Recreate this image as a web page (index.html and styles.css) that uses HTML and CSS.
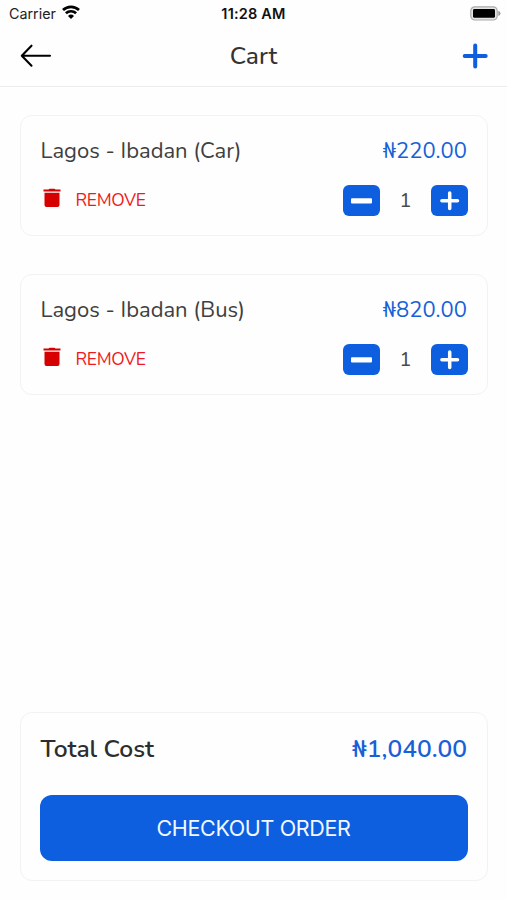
FILE: index.html
```html
<!DOCTYPE html>
<html lang="en">
<head>
<meta charset="utf-8">
<title>Cart</title>
<link rel="stylesheet" href="styles.css">
</head>
<body>
<div class="screen">
  <div class="status">
    <div class="carrier"><span class="carrier-name">Carrier</span>
      <svg class="wifi" width="18" height="14" viewBox="0 0 18 14"><g fill="none" stroke="#000" stroke-width="2.7"><path d="M1 5.1a11.6 11.6 0 0 1 16 0"/><path d="M3.9 8.3a7.400 7.400 0 0 1 10.200 0"/></g><path d="M6 10.900a4.400 4.400 0 0 1 6 0L9 13.900z"/></svg>
    </div>
    <span class="time">11:28 AM</span>
    <svg class="battery" width="31" height="15" viewBox="0 0 31 15"><rect x=".8" y=".8" width="26.4" height="13.2" rx="4" fill="#e4e4e4" stroke="#aaa" stroke-width="1.2"/><rect x="3" y="3" width="22" height="8.8" rx="1.4"/><path d="M28.3 4.8q2.2.7 2.2 2.6t-2.2 2.6z" fill="#999"/></svg>
  </div>
  <header class="header">
    <svg class="back" width="32" height="24" viewBox="0 0 32 24"><path d="M30 11.700H2M11.500 1.700L1.800 11.700l9.700 10" fill="none" stroke="#000" stroke-width="2.1" stroke-linecap="round" stroke-linejoin="round"/></svg>
    <h1 class="title">Cart</h1>
    <svg class="add" width="26" height="26" viewBox="0 0 26 26"><path d="M13.200 2.500v21M2.700 13h21" stroke="#0d5fdf" stroke-width="4" stroke-linecap="round"/></svg>
  </header>
  <main class="items">
    <section class="card">
      <div class="row"><span class="name">Lagos - Ibadan (Car)</span><span class="price">₦220.00</span></div>
      <div class="row actions">
        <div class="remove"><svg class="trash" width="18" height="20" viewBox="0 0 18 20"><path d="M.5 1.600h5l1-.9h5l1 .9h5v2H.5zM1.500 4.700h15v12.300q0 2-2 2h-11q-2 0-2-2z" fill="#d60000"/></svg><span class="remove-text">REMOVE</span></div>
        <div class="stepper">
          <span class="step"><svg width="37" height="31" viewBox="0 0 37 31"><rect x="8" y="13.200" width="21" height="5.200" rx="1" fill="#fff"/></svg></span>
          <span class="qty">1</span>
          <span class="step"><svg width="37" height="31" viewBox="0 0 37 31"><path d="M18.700 8v15.600M10.900 15.800h15.600" stroke="#fff" stroke-width="3.500" stroke-linecap="round"/></svg></span>
        </div>
      </div>
    </section>
    <section class="card">
      <div class="row"><span class="name">Lagos - Ibadan (Bus)</span><span class="price">₦820.00</span></div>
      <div class="row actions">
        <div class="remove"><svg class="trash" width="18" height="20" viewBox="0 0 18 20"><path d="M.5 1.600h5l1-.9h5l1 .9h5v2H.5zM1.500 4.700h15v12.300q0 2-2 2h-11q-2 0-2-2z" fill="#d60000"/></svg><span class="remove-text">REMOVE</span></div>
        <div class="stepper">
          <span class="step"><svg width="37" height="31" viewBox="0 0 37 31"><rect x="8" y="13.200" width="21" height="5.200" rx="1" fill="#fff"/></svg></span>
          <span class="qty">1</span>
          <span class="step"><svg width="37" height="31" viewBox="0 0 37 31"><path d="M18.700 8v15.600M10.900 15.800h15.600" stroke="#fff" stroke-width="3.500" stroke-linecap="round"/></svg></span>
        </div>
      </div>
    </section>
  </main>
  <footer class="summary">
    <div class="row total"><span>Total Cost</span><span class="total-price">₦1,040.00</span></div>
    <button class="checkout">CHECKOUT ORDER</button>
  </footer>
</div>
</body>
</html>
```
FILE: styles.css
```css
* { box-sizing: border-box; }
body { margin: 0; background: #fefefe; font-family: Nunito, "Noto Sans", sans-serif; color: #3f3f3f; }
svg { display: block; flex: none; }
.screen { width: 507px; height: 900px; display: flex; flex-direction: column; overflow: hidden; }
.status { height: 27px; flex: none; display: grid; grid-template-columns: 1fr auto 1fr; padding: 0 6px; font-family: Inter, sans-serif; line-height: 27px; color: #222; }
.carrier { display: flex; gap: 6px; padding-left: 3px; font-size: 14.3px; }
.wifi { margin-top: 5px; }
.time { font-size: 14.5px; font-weight: 600; letter-spacing: .2px; color: #111; }
.battery { justify-self: end; margin-top: 6px; }
.header { height: 60px; flex: none; display: grid; grid-template-columns: 1fr auto 1fr; align-items: center; padding: 0 19px 2px; border-bottom: 1px solid #ececec; }
.back { margin-left: 1px; }
.title { margin: 0; font-size: 24.5px; line-height: 34px; font-weight: 500; color: #333; }
.add { justify-self: end; }
.items { padding: 28px 19px 0 20px; display: flex; flex-direction: column; gap: 38px; }
.card { height: 121px; border: 1px solid #f2f2f2; border-radius: 12px; padding: 19px 19px 0; background: #fefefe; }
.row { display: flex; justify-content: space-between; align-items: center; white-space: nowrap; }
.card .row { height: 32px; }
.card .actions { height: 32px; margin-top: 17px; }
.name { padding-left: .5px; font-size: 22px; }
.price { padding-right: 1px; font-size: 22px; color: #1761d8; }
.remove { display: flex; align-items: center; gap: 15px; padding-left: 2.5px; }
.trash { margin-top: -5px; }
.remove-text { font-size: 17.5px; letter-spacing: -.35px; color: #f01820; }
.stepper { display: flex; align-items: center; }
.step { width: 37px; height: 31px; border-radius: 6px; background: #0d5fdf; }
.qty { width: 51px; text-align: center; font-size: 20.5px; color: #4a4a4a; }
.summary { margin: auto 19px 19px 20px; height: 169px; border: 1px solid #f2f2f2; border-radius: 12px; padding: 19px 19px 0; background: #fefefe; }
.total { height: 34px; padding: 0 1px 0 .5px; font-size: 24.6px; font-weight: 650; color: #2d2d2d; }
.total-price { color: #1761d8; }
.checkout { display: block; width: 100%; height: 66px; margin-top: 29px; padding: 0 1px 0 0; border: 0; border-radius: 12px; background: #0d5fdf; color: #f2f8ff; font-family: Inter, sans-serif; font-size: 21.5px; letter-spacing: -.35px; }
```
